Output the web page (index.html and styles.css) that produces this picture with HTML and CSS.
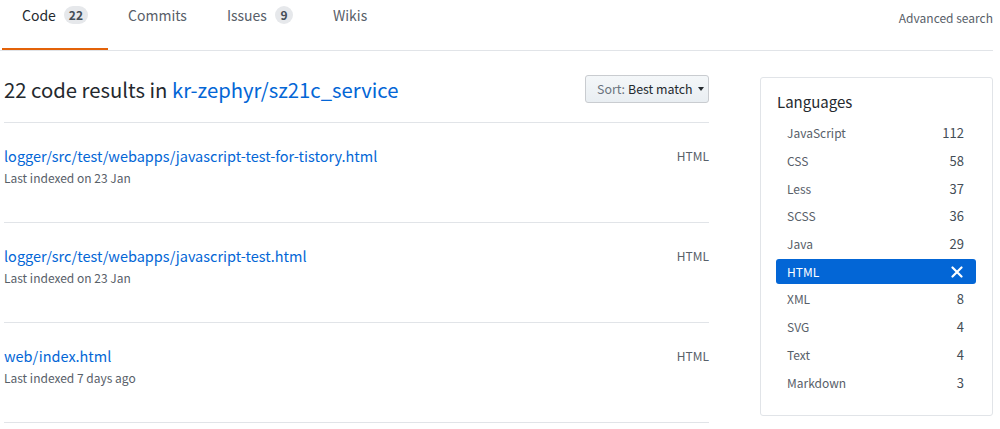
FILE: index.html
```html
<!DOCTYPE html>
<html>
<head>
<meta charset="utf-8">
<link rel="stylesheet" href="styles.css">
</head>
<body>
<div class="page">
  <nav class="tabs">
    <a class="tab selected">Code <span class="badge">22</span></a>
    <a class="tab">Commits</a>
    <a class="tab">Issues <span class="badge">9</span></a>
    <a class="tab">Wikis</a>
    <a class="adv">Advanced search</a>
  </nav>
  <div class="content">
    <main class="results">
      <div class="head">
        <h3 class="title">22 code results in <a class="repo">kr-zephyr/sz21c_service</a></h3>
        <button class="sort"><span class="muted">Sort:</span> Best match <span class="caret"></span></button>
      </div>
      <div class="item">
        <div class="info">
          <a class="path">logger/src/test/webapps/javascript-test-for-tistory.html</a>
          <div class="meta">Last indexed on 23 Jan</div>
        </div>
        <span class="lang">HTML</span>
      </div>
      <div class="item">
        <div class="info">
          <a class="path">logger/src/test/webapps/javascript-test.html</a>
          <div class="meta">Last indexed on 23 Jan</div>
        </div>
        <span class="lang">HTML</span>
      </div>
      <div class="item">
        <div class="info">
          <a class="path">web/index.html</a>
          <div class="meta">Last indexed 7 days ago</div>
        </div>
        <span class="lang">HTML</span>
      </div>
    </main>
    <aside class="side">
      <h4 class="side-title">Languages</h4>
      <ul class="langs">
        <li class="lrow"><span>JavaScript</span><span class="cnt">112</span></li>
        <li class="lrow"><span>CSS</span><span class="cnt">58</span></li>
        <li class="lrow"><span>Less</span><span class="cnt">37</span></li>
        <li class="lrow"><span>SCSS</span><span class="cnt">36</span></li>
        <li class="lrow"><span>Java</span><span class="cnt">29</span></li>
        <li class="lrow active"><span>HTML</span><svg class="x" width="12" height="12" viewBox="0 0 12 12"><path d="M1.5 1.5 L10.5 10.5 M10.5 1.5 L1.5 10.5" stroke="#fff" stroke-width="2.2" stroke-linecap="round"/></svg></li>
        <li class="lrow"><span>XML</span><span class="cnt">8</span></li>
        <li class="lrow"><span>SVG</span><span class="cnt">4</span></li>
        <li class="lrow"><span>Text</span><span class="cnt">4</span></li>
        <li class="lrow"><span>Markdown</span><span class="cnt">3</span></li>
      </ul>
    </aside>
  </div>
</div>
</body>
</html>
```

FILE: styles.css
```css
* { box-sizing: border-box; }
body {
  margin: 0;
  background: #fff;
  font-family: "Noto Sans CJK KR", "Noto Sans", sans-serif;
  color: #24292e;
}
.page { width: 993px; }
.tabs {
  display: flex;
  align-items: flex-start;
  height: 51px;
  border-bottom: 1px solid #e1e4e8;
  padding-left: 2px;
}
.tab {
  display: flex;
  align-items: center;
  gap: 8px;
  height: 50px;
  padding: 0 20px 18px;
  font-size: 14px;
  line-height: 20px;
  color: #586069;
  border-bottom: 2px solid transparent;
}
.tab.selected { color: #24292e; border-bottom-color: #e36209; }
.badge {
  display: inline-block;
  min-width: 18px;
  padding: 0 5px;
  height: 18px;
  line-height: 18px;
  border-radius: 9px;
  background: #e6e8eb;
  color: #444d56;
  font-size: 12px;
  font-weight: 600;
  text-align: center;
}
.adv {
  margin-left: auto;
  font-size: 12px;
  line-height: 18px;
  padding-top: 9px;
  color: #586069;
}
.content {
  display: flex;
  gap: 51px;
  padding-left: 4px;
  padding-top: 25px;
}
.results { width: 705px; }
.head {
  display: flex;
  justify-content: space-between;
  align-items: flex-start;
  height: 47px;
  border-bottom: 1px solid #e1e4e8;
}
.title {
  margin: 0;
  font-size: 20.3px;
  font-weight: 400;
  line-height: 26px;
  color: #24292e;
}
.repo { color: #0366d6; }
.sort {
  height: 28px;
  width: 124px;
  padding: 0 0 0 11px;
  font-family: inherit;
  font-size: 12.4px;
  color: #24292e;
  background: linear-gradient(#f4f7f9, #e9eef2);
  border: 1px solid #c9ccd0;
  border-radius: 3px;
  display: flex;
  align-items: center;
  gap: 3px;
  margin-top: -1px;
}
.muted { color: #6a737d; }
.caret {
  display: inline-block;
  border-top: 4px solid #24292e;
  border-left: 3.5px solid transparent;
  border-right: 3.5px solid transparent;
  margin-left: 2px;
}
.item {
  display: flex;
  justify-content: space-between;
  align-items: flex-start;
  height: 100px;
  padding-top: 23px;
  border-bottom: 1px solid #e1e4e8;
}
.path {
  display: block;
  font-size: 14.5px;
  line-height: 20px;
  color: #0366d6;
}
.meta {
  font-size: 12px;
  line-height: 18px;
  margin-top: 3px;
  color: #586069;
}
.lang {
  font-size: 12px;
  line-height: 18px;
  color: #586069;
  margin-top: 1px;
}
.side {
  width: 233px;
  height: 339px;
  margin-top: 1px;
  border: 1px solid #e1e4e8;
  border-radius: 3px;
  padding: 12px 16px 0 15px;
}
.side-title {
  margin: 0 0 5px 1px;
  font-size: 15px;
  font-weight: 400;
  line-height: 24px;
  color: #24292e;
}
.langs { list-style: none; margin: 0; padding: 0; }
.lrow {
  display: flex;
  justify-content: space-between;
  align-items: center;
  height: 27.7px;
  padding: 0 12px 0 11px;
  font-size: 12px;
  color: #586069;
  border-radius: 3px;
}
.cnt { font-size: 13px; color: #444d56; }
.lrow.active {
  background: #0366d6;
  color: #fff;
  height: 25px;
  margin: 2px 0 0.7px;
  font-weight: 400;
}
.x { margin-right: 1px; }
```
